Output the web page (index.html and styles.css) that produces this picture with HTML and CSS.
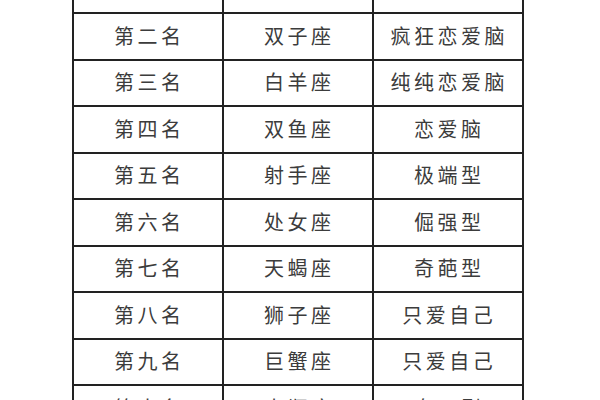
FILE: index.html
```html
<!DOCTYPE html>
<html lang="zh-CN">
<head>
<meta charset="utf-8">
<link rel="stylesheet" href="styles.css">
</head>
<body>
<div class="table">
  <div class="cell"></div><div class="cell"></div><div class="cell"></div>
  <div class="cell">第二名</div><div class="cell">双子座</div><div class="cell">疯狂恋爱脑</div>
  <div class="cell">第三名</div><div class="cell">白羊座</div><div class="cell">纯纯恋爱脑</div>
  <div class="cell">第四名</div><div class="cell">双鱼座</div><div class="cell">恋爱脑</div>
  <div class="cell">第五名</div><div class="cell">射手座</div><div class="cell">极端型</div>
  <div class="cell">第六名</div><div class="cell">处女座</div><div class="cell">倔强型</div>
  <div class="cell">第七名</div><div class="cell">天蝎座</div><div class="cell">奇葩型</div>
  <div class="cell">第八名</div><div class="cell">狮子座</div><div class="cell">只爱自己</div>
  <div class="cell">第九名</div><div class="cell">巨蟹座</div><div class="cell">只爱自己</div>
  <div class="cell">第十名</div><div class="cell">水瓶座</div><div class="cell">专一型</div>
</div>
</body>
</html>
```
FILE: styles.css
```css
html, body {
  margin: 0;
  padding: 0;
  background: #ffffff;
  overflow: hidden;
  height: 400px;
}
.table {
  display: grid;
  grid-template-columns: repeat(3, 148px);
  grid-auto-rows: 44.5px;
  gap: 2px;
  padding: 2px;
  width: max-content;
  background: #222222;
  margin: -34.5px 0 0 71.5px;
}
.cell {
  background: #ffffff;
  display: flex;
  align-items: center;
  justify-content: center;
  font-family: "Noto Sans CJK SC", "Noto Sans", sans-serif;
  font-size: 20px;
  font-weight: 400;
  letter-spacing: 3.5px;
  padding-left: 3.5px;
  padding-bottom: 2px;
  color: #3c3c3c;
}
```
